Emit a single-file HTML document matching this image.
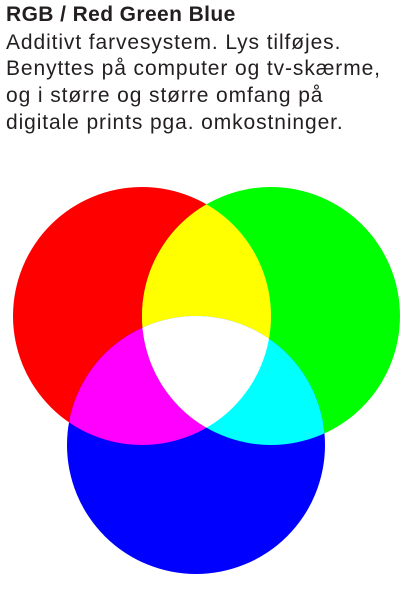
<!DOCTYPE html>
<html><head><style>
body{margin:0;width:412px;height:591px;background:#fff;overflow:hidden;font-family:"Liberation Sans",sans-serif;color:#231f20}
.t{position:absolute;left:6px;white-space:nowrap;font-size:21px;letter-spacing:0.9px}
</style></head><body>
<div class="t" style="top:3px;font-weight:bold;letter-spacing:0.4px">RGB / Red Green Blue</div>
<div class="t" style="top:31px">Additivt farvesystem. Lys tilføjes.</div>
<div class="t" style="top:57px">Benyttes på computer og tv-skærme,</div>
<div class="t" style="top:84px">og i større og større omfang på</div>
<div class="t" style="top:111px">digitale prints pga. omkostninger.</div>
<svg width="412" height="591" style="position:absolute;left:0;top:0">
<defs>
<clipPath id="r"><circle cx="142" cy="316" r="129"/></clipPath>
<clipPath id="g"><circle cx="271" cy="316" r="129"/></clipPath>
</defs>
<circle cx="142" cy="316" r="129" fill="#f00"/>
<circle cx="271" cy="316" r="129" fill="#0f0"/>
<circle cx="196" cy="445" r="129" fill="#00f"/>
<circle cx="271" cy="316" r="129" fill="#ff0" clip-path="url(#r)"/>
<circle cx="196" cy="445" r="129" fill="#f0f" clip-path="url(#r)"/>
<circle cx="196" cy="445" r="129" fill="#0ff" clip-path="url(#g)"/>
<g clip-path="url(#r)"><circle cx="196" cy="445" r="129" fill="#fff" clip-path="url(#g)"/></g>
</svg>
</body></html>
